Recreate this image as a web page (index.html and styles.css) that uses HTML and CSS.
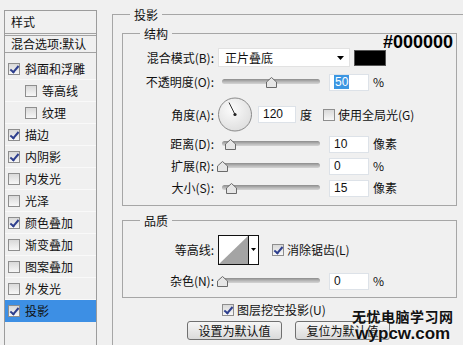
FILE: index.html
```html
<!DOCTYPE html>
<html lang="zh-CN">
<head>
    <meta charset="UTF-8">
    <title>图层样式 - 投影</title>
    <link rel="stylesheet" href="styles.css">
</head>
<body>

    <!-- Style list -->
    <div class="style-list">
        <div class="list-head">样式</div>
        <div class="list-blend">混合选项:默认</div>
        <ul class="effects">
            <li><span class="cb on"></span>斜面和浮雕</li>
            <li class="sub"><span class="cb"></span>等高线</li>
            <li class="sub"><span class="cb"></span>纹理</li>
            <li><span class="cb on"></span>描边</li>
            <li><span class="cb on"></span>内阴影</li>
            <li><span class="cb"></span>内发光</li>
            <li><span class="cb"></span>光泽</li>
            <li><span class="cb on"></span>颜色叠加</li>
            <li><span class="cb"></span>渐变叠加</li>
            <li><span class="cb"></span>图案叠加</li>
            <li><span class="cb"></span>外发光</li>
            <li class="active"><span class="cb on"></span>投影</li>
        </ul>
    </div>

    <!-- Drop shadow settings -->
    <div class="main">
        <div class="group outer">
            <span class="legend">投影</span>

            <div class="group inner">
                <div class="struct-head">
                    <span class="legend">结构</span>
                    <span class="hex">#000000</span>
                </div>

                <div class="row row-blend">
                    <span class="lbl">混合模式(B):</span>
                    <div class="select">
                        正片叠底
                        <svg class="arrow" width="7" height="4" viewBox="0 0 7 4"><polygon points="0,0 7,0 3.5,4" fill="#000"/></svg>
                    </div>
                    <span class="swatch"></span>
                </div>

                <div class="row row-opacity">
                    <span class="lbl">不透明度(O):</span>
                    <div class="slider"><span class="track"></span><svg class="thumb" style="left:44px" width="11" height="11" viewBox="0 0 11 11"><polygon points="5.5,0.5 10.5,5 10.5,10.5 0.5,10.5 0.5,5" fill="#e6e6e6" stroke="#6a6a6a"/></svg></div>
                    <span class="num"><span class="sel">50</span></span>
                    <span class="unit">%</span>
                </div>

                <div class="row row-angle">
                    <span class="lbl">角度(A):</span>
                    <svg class="dial" width="36" height="35" viewBox="0 0 36 35">
                        <defs>
                            <radialGradient id="dialFill" cx="0.4" cy="0.35" r="0.7">
                                <stop offset="0" stop-color="#fbfbfb"/>
                                <stop offset="1" stop-color="#dedede"/>
                            </radialGradient>
                        </defs>
                        <circle cx="18" cy="17.5" r="16.5" fill="url(#dialFill)" stroke="#8a8a8a"/>
                        <line x1="18" y1="17.5" x2="12" y2="5.5" stroke="#333" stroke-width="1"/>
                        <circle cx="18" cy="17.5" r="1.6" fill="#222"/>
                    </svg>
                    <span class="num num-angle">120</span>
                    <span class="unit deg">度</span>
                    <span class="cb global"></span>
                    <span class="cb-text">使用全局光(G)</span>
                </div>

                <div class="row">
                    <span class="lbl">距离(D):</span>
                    <div class="slider"><span class="track"></span><svg class="thumb" style="left:3px" width="11" height="11" viewBox="0 0 11 11"><polygon points="5.5,0.5 10.5,5 10.5,10.5 0.5,10.5 0.5,5" fill="#e6e6e6" stroke="#6a6a6a"/></svg></div>
                    <span class="num">10</span>
                    <span class="unit">像素</span>
                </div>

                <div class="row">
                    <span class="lbl">扩展(R):</span>
                    <div class="slider"><span class="track"></span><svg class="thumb" style="left:-5px" width="11" height="11" viewBox="0 0 11 11"><polygon points="5.5,0.5 10.5,5 10.5,10.5 0.5,10.5 0.5,5" fill="#e6e6e6" stroke="#6a6a6a"/></svg></div>
                    <span class="num">0</span>
                    <span class="unit">%</span>
                </div>

                <div class="row">
                    <span class="lbl">大小(S):</span>
                    <div class="slider"><span class="track"></span><svg class="thumb" style="left:4px" width="11" height="11" viewBox="0 0 11 11"><polygon points="5.5,0.5 10.5,5 10.5,10.5 0.5,10.5 0.5,5" fill="#e6e6e6" stroke="#6a6a6a"/></svg></div>
                    <span class="num">15</span>
                    <span class="unit">像素</span>
                </div>
            </div>

            <div class="group inner quality">
                <span class="legend">品质</span>

                <div class="row row-contour">
                    <span class="lbl">等高线:</span>
                    <svg class="contour" width="41" height="30" viewBox="0 0 41 30">
                        <rect x="0.5" y="0.5" width="40" height="29" fill="#fff" stroke="#111"/>
                        <polygon points="1,29 30,1 30,29" fill="#a4a4a4"/>
                        <line x1="30.5" y1="0" x2="30.5" y2="30" stroke="#111"/>
                        <polygon points="33,13 38,13 35.5,16" fill="#000"/>
                    </svg>
                    <span class="cb on aa"></span>
                    <span class="cb-text">消除锯齿(L)</span>
                </div>

                <div class="row row-noise">
                    <span class="lbl">杂色(N):</span>
                    <div class="slider"><span class="track"></span><svg class="thumb" style="left:-5px" width="11" height="11" viewBox="0 0 11 11"><polygon points="5.5,0.5 10.5,5 10.5,10.5 0.5,10.5 0.5,5" fill="#e6e6e6" stroke="#6a6a6a"/></svg></div>
                    <span class="num">0</span>
                    <span class="unit">%</span>
                </div>
            </div>

            <div class="row knockout">
                <span class="cb on"></span>
                <span class="cb-text">图层挖空投影(U)</span>
            </div>

            <div class="buttons">
                <button>设置为默认值</button>
                <button>复位为默认值</button>
            </div>
        </div>
    </div>

    <!-- site watermark -->
    <div class="watermark">
        <div class="wm-cn">无忧电脑学习网</div>
        <div class="wm-url">wypcw.com</div>
    </div>

</body>
</html>
```

FILE: styles.css
```css
body {
    margin: 0;
    height: 345px;
    overflow: hidden;
    display: flex;
    align-items: flex-start;
    position: relative;
    background: #f0f0f0;
    color: #111;
    font-family: "Noto Sans CJK SC", "Liberation Sans", sans-serif;
    font-size: 12px;
    line-height: 16px;
}

/* left list */
.style-list {
    box-sizing: border-box;
    width: 93px;
    height: 335px;
    margin: 10px 0 0 4px;
    border: 1px solid #9c9c9c;
    border-bottom: none;
    flex-shrink: 0;
}
.list-head {
    height: 22px;
    line-height: 22px;
    padding-left: 6px;
    border-bottom: 3px double #a2a2a2;
}
.list-blend {
    height: 16px;
    line-height: 16px;
    padding-left: 6px;
    border-bottom: 1px solid #a2a2a2;
}
.effects {
    list-style: none;
    margin: 0;
    padding: 5px 0 0;
}
.effects li {
    display: flex;
    align-items: center;
    height: 21px;
    padding-left: 3px;
    border-bottom: 1px solid #f9f9f9;
}
.effects li.sub {
    padding-left: 20px;
}
.effects li.active {
    background: #3d8fe4;
    border-bottom-color: #3d8fe4;
}
.effects li .cb {
    margin-right: 5px;
}

/* checkbox */
.cb {
    box-sizing: border-box;
    display: inline-block;
    width: 12px;
    height: 12px;
    border: 1px solid #8e8e8e;
    background: linear-gradient(#d9d9d9, #f7f7f7);
    position: relative;
    flex-shrink: 0;
}
.cb.on::after {
    content: "";
    position: absolute;
    left: 3px;
    top: 0;
    width: 3px;
    height: 7px;
    border-right: 2px solid #2e3f8e;
    border-bottom: 2px solid #2e3f8e;
    transform: rotate(40deg);
}
.cb-text {
    margin-left: 3px;
    white-space: nowrap;
}

/* groups */
.main {
    margin-left: 15px;
    padding-top: 14px;
}
.group {
    box-sizing: border-box;
    border: 1px solid #a6a6a6;
}
.outer {
    width: 360px;
    height: 331px;
    border-right: none;
    border-bottom: none;
}
.legend {
    display: block;
    width: fit-content;
    height: 17px;
    line-height: 17px;
    margin: -9px 0 0 17px;
    padding: 0 4px;
    background: #f0f0f0;
}
.inner {
    width: 335px;
    margin: 10px 0 0 9px;
    padding-bottom: 6px;
}
.quality {
    margin-top: 14px;
    padding-bottom: 5px;
}
.struct-head {
    display: flex;
    justify-content: space-between;
    align-items: flex-start;
    height: 23px;
    margin-top: -9px;
}
.struct-head .legend {
    margin-top: 0;
}
.hex {
    margin: 9px 3px 0 0;
    font-family: "Liberation Sans", sans-serif;
    font-weight: bold;
    font-size: 18px;
    line-height: 16px;
    color: #000;
}

/* rows */
.row {
    display: flex;
    align-items: center;
    height: 22px;
}
.lbl {
    width: 91px;
    text-align: right;
    white-space: nowrap;
    flex-shrink: 0;
}
.row-blend {
    height: 19px;
}
.row-opacity {
    height: 20px;
    margin-top: 5px;
}
.row-angle {
    height: 35px;
    margin-top: 5px;
    margin-bottom: 1px;
}
.row-contour {
    height: 30px;
    margin-top: 6px;
}
.row-noise {
    margin-top: 5px;
}

.select {
    box-sizing: border-box;
    display: flex;
    align-items: center;
    justify-content: space-between;
    width: 132px;
    height: 19px;
    margin-left: 4px;
    padding: 0 5px 0 6px;
    background: #fff;
    border: 1px solid #e2e2e2;
}
.swatch {
    width: 32px;
    height: 16px;
    margin-left: 4px;
    background: #000;
    border: 1px solid #555;
    box-sizing: border-box;
}

.slider {
    position: relative;
    width: 98px;
    height: 12px;
    margin-left: 8px;
    margin-top: 2px;
}
.track {
    position: absolute;
    left: 0;
    right: 0;
    top: 2px;
    height: 5px;
    border-radius: 3px;
    background: linear-gradient(#8c8c8c, #bcbcbc 60%, #d4d4d4);
}
.thumb {
    position: absolute;
    top: 0;
}

.num {
    box-sizing: border-box;
    width: 40px;
    height: 17px;
    margin-left: 9px;
    padding-left: 4px;
    line-height: 15px;
    background: #fff;
    border: 1px solid #dde2e8;
    font-family: "Liberation Sans", sans-serif;
}
.num-angle {
    width: 38px;
    margin-left: 5px;
}
.sel {
    background: #3c96e2;
    color: #fff;
    padding: 0 1px;
}
.unit {
    margin-left: 4px;
}
.deg {
    margin-left: 4px;
    margin-right: 11px;
}
.dial {
    margin-left: 3px;
}
.contour {
    margin-left: 4px;
}
.aa {
    margin-left: 13px;
}

/* bottom */
.knockout {
    height: 20px;
    margin: 2px 0 0 109px;
}
.buttons {
    display: flex;
    gap: 13px;
    margin: 1px 0 0 74px;
}
button {
    width: 95px;
    height: 19px;
    padding: 0;
    font-family: inherit;
    font-size: 12px;
    line-height: 16px;
    color: #111;
    background: linear-gradient(#f6f6f6, #dadada);
    border: 1px solid #707070;
    border-radius: 3px;
}

/* watermark */
.watermark {
    position: absolute;
    left: 352px;
    top: 309px;
    text-align: center;
}
.wm-cn {
    font-weight: bold;
    font-size: 14px;
    line-height: 15px;
    color: #111;
    letter-spacing: 0.5px;
}
.wm-url {
    margin-top: 1px;
    font-family: "Liberation Sans", sans-serif;
    font-weight: bold;
    font-size: 17px;
    line-height: 17px;
    color: #111;
    text-shadow: 0 0 2px #fff;
}
```
